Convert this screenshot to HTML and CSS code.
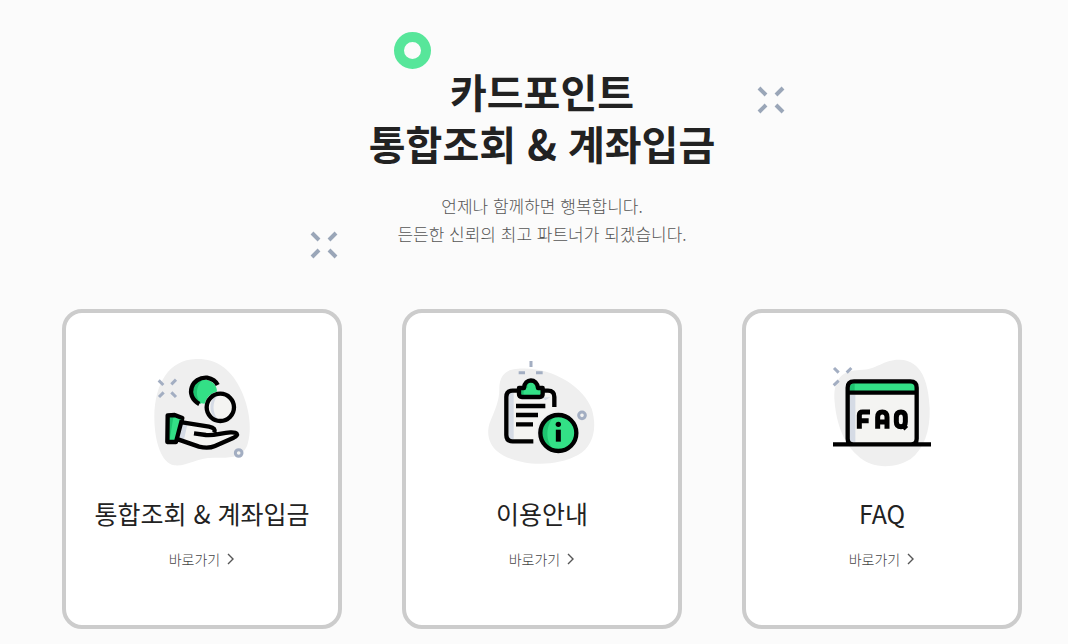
FILE: index.html
```html
<!DOCTYPE html>
<html lang="ko">
<head>
<meta charset="utf-8">
<meta name="viewport" content="width=device-width, initial-scale=1">
<title>카드포인트 통합조회 &amp; 계좌입금</title>
<link rel="stylesheet" href="styles.css">
</head>
<body>
<svg class="defs" width="0" height="0" aria-hidden="true">
  <symbol id="spark" viewBox="0 0 28 28">
    <path d="M2 2l7 7M26 2l-7 7M2 26l7-7M26 26l-7-7" fill="none" stroke="#9aa6b8" stroke-width="4"/>
  </symbol>
  <symbol id="chevron" viewBox="0 0 8 12">
    <path d="M1 1l5 5-5 5" fill="none" stroke="#555" stroke-width="1.4"/>
  </symbol>
</svg>
<main class="page">
  <header class="hero">
    <span class="ring"></span>
    <svg class="spark spark-right" aria-hidden="true"><use href="#spark"/></svg>
    <svg class="spark spark-left" aria-hidden="true"><use href="#spark"/></svg>
    <h1 class="hero-title">카드포인트<br>통합조회 &amp; 계좌입금</h1>
    <p class="hero-text">언제나 함께하면 행복합니다.<br>든든한 신뢰의 최고 파트너가 되겠습니다.</p>
  </header>
  <section class="cards">
    <article class="card">
      <svg class="card-icon" viewBox="0 0 375 390" aria-hidden="true">
        <path d="M168 42C226 40 270 70 298 125C325 175 340 250 321 303C307 338 267 340 222 338C166 338 142 365 103 361C62 354 43 284 43 215C44 116 87 44 168 42Z" fill="#efefef"/>
        <path d="M56 106l14 14M108 104l-14 14M57 156l14-14M108 156l-14-14" class="mark"/>
        <circle cx="296" cy="324" r="10" class="mark-ring"/>
        <circle cx="195" cy="140" r="36" fill="#33e086"/>
        <path d="M192 101C145 109 153 169 184 177C166 158 164 122 192 101Z" fill="#1ec36f"/>
        <path d="M178 177C132 151 156 95 201 98C216 101 227 107 233 120" class="line"/>
        <circle cx="241" cy="187" r="48" fill="#efefef"/>
        <circle cx="241" cy="187" r="41" fill="#f4f4f2"/>
        <path d="M234 150C204 159 204 213 234 223C216 204 216 170 234 150Z" fill="#d5dbe5"/>
        <circle cx="241" cy="187" r="41" class="line"/>
        <path d="M126 232L208 245C222 248 227 254 230 265C250 261 269 258 286 265C293 269 286 276 278 279L228 303C215 309 199 312 184 307L112 283Z" fill="#f4f4f2"/>
        <path d="M126 232l17 3-12 53-16-7Z" fill="#d5dbe5"/>
        <path d="M83 211L109 211L126 219L108 290L82 291Z" fill="#33e086"/>
        <path d="M83 211h18l-13 80h-6Z" fill="#1ec36f"/>
        <path d="M83 211L104 210L127 219L108 291L82 291ZM127 232L207 245C223 248 226 254 223 263M162 265L198 270C224 273 244 263 271 262C291 261 299 269 281 278L225 303C207 311 193 309 177 305L114 283" class="line"/>
      </svg>
      <h2 class="card-title">통합조회 &amp; 계좌입금</h2>
      <a class="card-link" href="#inquiry">바로가기<svg class="chevron" aria-hidden="true"><use href="#chevron"/></svg></a>
    </article>
    <article class="card">
      <svg class="card-icon" viewBox="0 0 375 390" aria-hidden="true">
        <path d="M108 72C212 60 311 126 335 191C352 246 342 303 294 330C225 367 130 362 71 332C26 309 18 268 29 234C43 198 59 168 58 129C59 96 73 75 108 72Z" fill="#efefef"/>
        <path d="M153 48v18M116 83h19M168 83h20" class="mark"/>
        <circle cx="306" cy="211" r="10" class="mark-ring"/>
        <rect x="80" y="137" width="144" height="153" rx="16" fill="#f4f4f2"/>
        <path d="M86 142h15v141h-15ZM186 157h25l-15 9Z" fill="#d5dbe5"/>
        <path d="M116 137H98Q79 137 79 156V270Q79 289 98 289H160M188 137H204Q223 137 223 156V186" class="line"/>
        <path d="M117 130H132C134 99 171 99 174 130H188V156H117Z" fill="#33e086"/>
        <path d="M119 130h15q3-14 15-20q-8 9-7 19h-11v25h-12Z" fill="#1ec36f"/>
        <path d="M117 129H132C134 99 171 99 174 129H188V147Q188 156 179 156H126Q117 156 117 147Z" class="line"/>
        <path d="M108 183h88M108 210h66M108 238h51" class="line"/>
        <circle cx="235" cy="264" r="66" fill="#efefef"/>
        <circle cx="235" cy="264" r="54" fill="#33e086"/>
        <path d="M227 211C175 218 171 307 224 317C194 291 195 238 227 211Z" fill="#1ec36f"/>
        <circle cx="235" cy="264" r="54" class="line"/>
        <circle cx="235" cy="238" r="8"/>
        <path d="M235 254v36" class="line stem"/>
      </svg>
      <h2 class="card-title">이용안내</h2>
      <a class="card-link" href="#guide">바로가기<svg class="chevron" aria-hidden="true"><use href="#chevron"/></svg></a>
    </article>
    <article class="card">
      <svg class="card-icon" viewBox="0 0 375 390" aria-hidden="true">
        <path d="M43 160C42 94 72 77 119 75C175 73 189 43 240 44C304 46 326 110 329 190C331 260 311 313 271 343C221 373 153 372 111 330C64 287 47 222 43 160Z" fill="#efefef"/>
        <path d="M42 69l14 14M94 69l-14 14M41 121l15-14" class="mark"/>
        <rect x="83" y="108" width="207" height="190" rx="16" fill="#f4f4f2"/>
        <path d="M89 149h17v143h-17Z" fill="#d5dbe5"/>
        <path d="M89 138V125Q89 114 101 114H272Q285 114 285 126V138Z" fill="#33e086"/>
        <path d="M89 138V125Q90 117 104 116V138Z" fill="#1ec36f"/>
        <path d="M100 298Q83 298 83 281V128Q83 109 102 109H271Q290 109 290 128V281Q290 298 273 298M84 143H289M39 298H333" class="line"/>
        <path d="M118 251V211Q118 201 128 201H150M118 227H146M173 251V217Q173 201 187 201Q201 201 201 217V251M173 231H201M229 216Q229 201 243 201Q256 201 256 216V230Q256 245 243 245Q229 245 229 230ZM248 240L259 251" class="line stem"/>
      </svg>
      <h2 class="card-title">FAQ</h2>
      <a class="card-link" href="#faq">바로가기<svg class="chevron" aria-hidden="true"><use href="#chevron"/></svg></a>
    </article>
  </section>
</main>
</body>
</html>
```
FILE: styles.css
```css
* {
  box-sizing: border-box;
}

body {
  margin: 0;
  background: #fbfbfb;
  color: #222;
  font-family: "Noto Sans CJK KR", "Noto Sans", sans-serif;
}

.defs {
  position: absolute;
}

.page {
  padding: 65px 46px 15px 62px;
}

.hero {
  position: relative;
  text-align: center;
}

.hero-title {
  margin: 0;
  font-size: 40px;
  font-weight: 700;
  line-height: 52px;
}

.hero-text {
  margin: 23px 0 0;
  color: #555;
  font-size: 17px;
  font-weight: 300;
  line-height: 28px;
}

.ring {
  position: absolute;
  top: -33px;
  left: calc(50% - 148px);
  width: 37px;
  height: 37px;
  border: 10px solid #57e69a;
  border-radius: 50%;
}

.spark {
  position: absolute;
  width: 28px;
  height: 28px;
}

.spark-right {
  top: 21px;
  left: calc(50% + 215px);
}

.spark-left {
  top: 166px;
  left: calc(50% - 232px);
}

.cards {
  display: grid;
  grid-template-columns: repeat(3, 1fr);
  gap: 60px;
  margin-top: 61px;
}

.card {
  display: flex;
  flex-direction: column;
  align-items: center;
  padding: 32px 16px 56px;
  border: 4px solid #ccc;
  border-radius: 20px;
  background: #fff;
}

.card-icon {
  width: 125px;
  height: 130px;
}

.card-title {
  margin: 19px 0 17px;
  font-size: 25px;
  font-weight: 400;
  line-height: 38px;
}

.card-link {
  display: flex;
  align-items: center;
  gap: 7px;
  color: #444;
  font-size: 14px;
  font-weight: 300;
  line-height: 20px;
  text-decoration: none;
}

.chevron {
  width: 8px;
  height: 12px;
}

.line {
  fill: none;
  stroke: #000;
  stroke-width: 13;
  stroke-linejoin: round;
}

.stem {
  stroke-width: 15;
}

.mark {
  fill: none;
  stroke: #a3aec2;
  stroke-width: 9;
}

.mark-ring {
  fill: #f4f4f2;
  stroke: #a3aec2;
  stroke-width: 9;
}
```
